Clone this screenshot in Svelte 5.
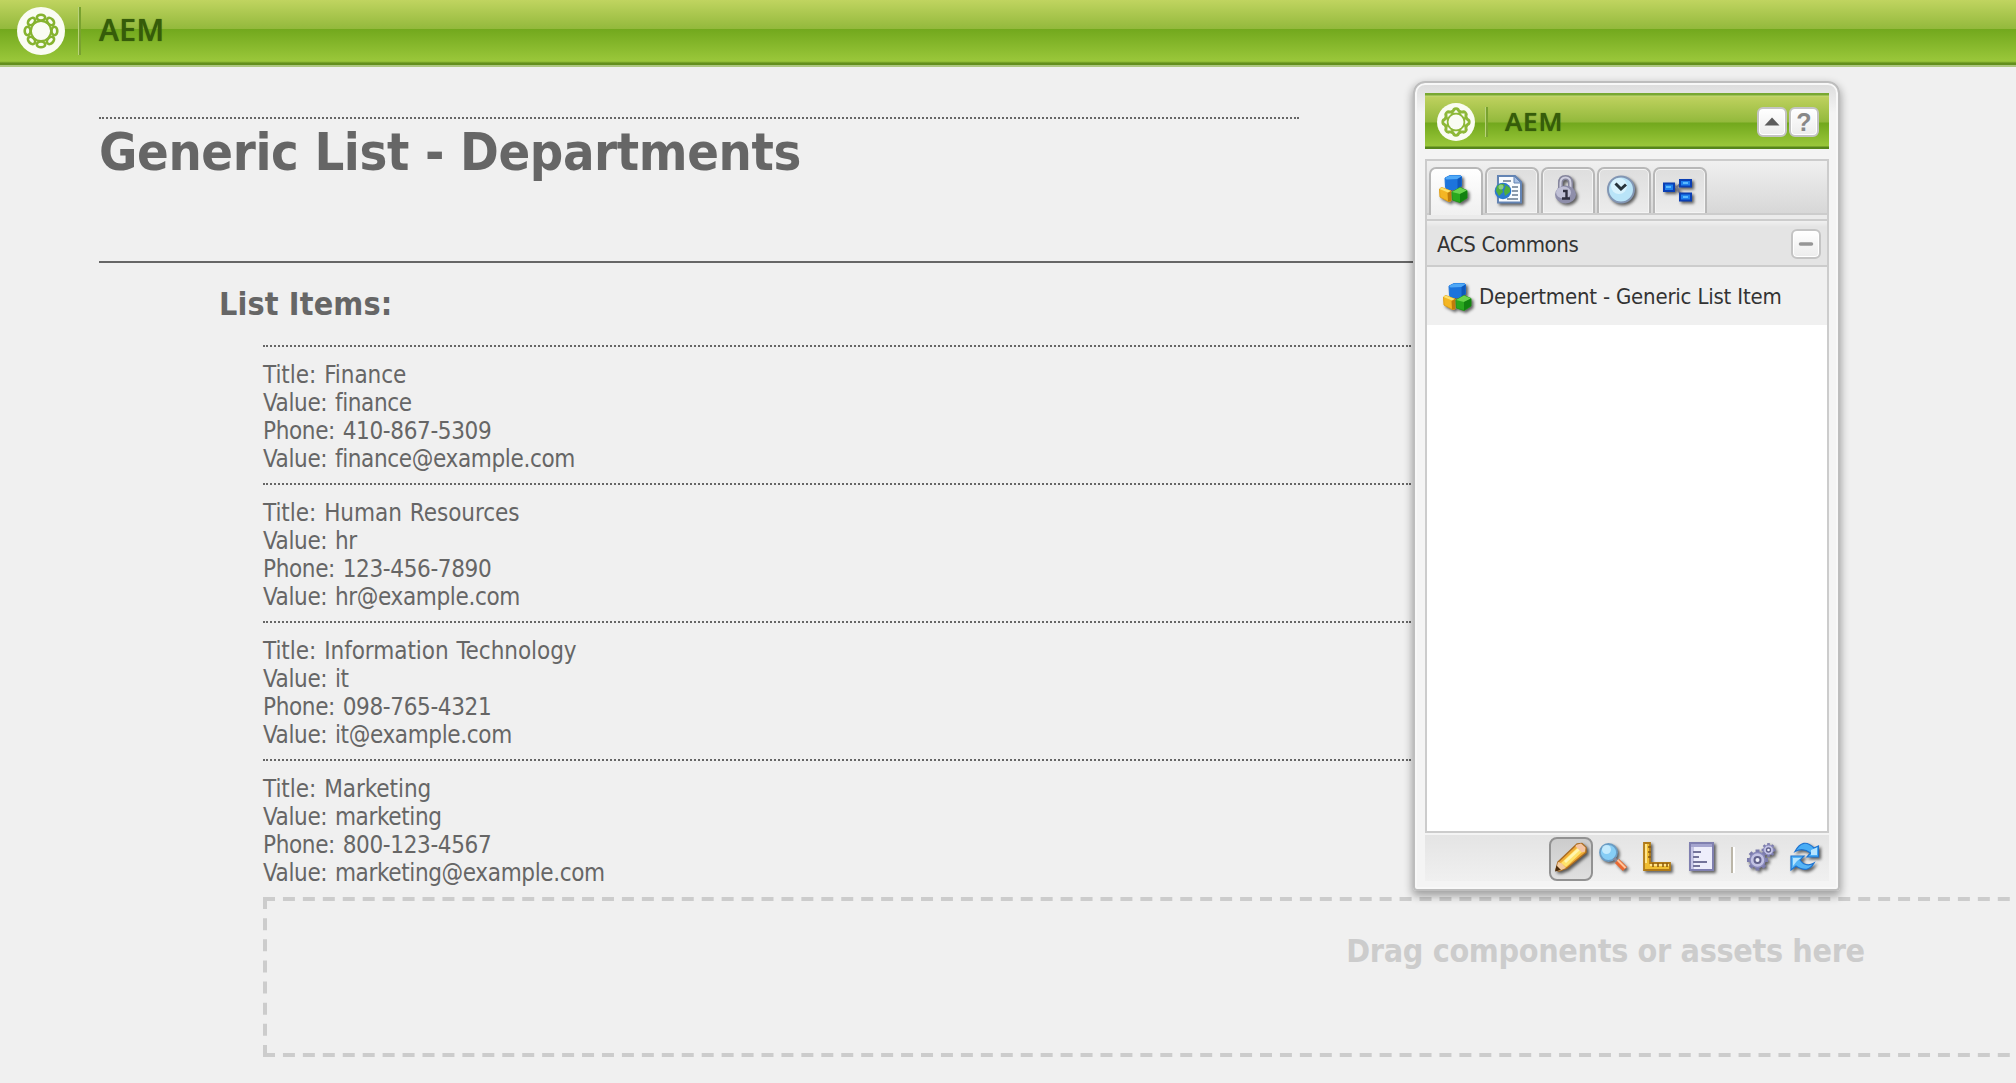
<script>
  const departments = [
    ['Finance', 'finance', '410-867-5309', 'finance@example.com'],
    ['Human Resources', 'hr', '123-456-7890', 'hr@example.com'],
    ['Information Technology', 'it', '098-765-4321', 'it@example.com'],
    ['Marketing', 'marketing', '800-123-4567', 'marketing@example.com']
  ];
  const tabs = ['cubes', 'page', 'lock', 'clock', 'flow'];
  const petals = [0, 45, 90, 135, 180, 225, 270, 315];
  const teeth = [0, 45, 90, 135];
</script>

{#snippet logo()}
  <svg class="logo" viewBox="0 0 48 48">
    <circle cx="24" cy="24" r="24" fill="#fafcf3" />
    <g fill="none" stroke="#86b32f" stroke-width="2.6">
      {#each petals as a}
        <ellipse cx="24" cy="10.6" rx="4.2" ry="2.9" transform="rotate({a} 24 24)" />
      {/each}
      <circle cx="24" cy="24" r="10" stroke-width="1.8" />
    </g>
  </svg>
{/snippet}

{#snippet compactLogo()}
  <svg class="logo" viewBox="0 0 48 48">
    <circle cx="24" cy="24" r="24" fill="#fafcf3" />
    <g fill="#8db838">
      <circle cx="24" cy="24" r="16" />
      {#each petals as a}
        <circle cx="24" cy="10.500" r="5" transform="rotate({a} 24 24)" />
      {/each}
    </g>
    <g fill="#fafcf3">
      <circle cx="24" cy="24" r="9.500" />
      {#each petals as a}
        <path d="M20.600 12.400L24 8.600L27.400 12.400Z" transform="rotate({a} 24 24)" />
      {/each}
    </g>
  </svg>
{/snippet}

{#snippet icon(name)}
  <svg class="icon" viewBox="0 0 32 32">
    {#if name === 'cubes'}
      <g stroke-width="1" stroke-linejoin="round">
        <path d="M6 3l5-2.500h10l1.500 1v9.500l-4 3.500H8L6.500 12z" fill="#1c74dc" stroke="#1c74dc" />
        <path d="M6 3l5-2.500h10l1.500 1-4 2.500-11 .5z" fill="#4fa8f6" />
        <path d="M18.500 4l4-2.500v9.500l-4 3.500z" fill="#0f58bb" />
        <path d="M.5 14l2-1.500L12 16v10l-2.500.5L1 22z" fill="#f4b624" stroke="#e0a018" />
        <path d="M.5 14l2-1.500L12 16l-3 1.500z" fill="#fde26a" />
        <path d="M8.500 18l3.500-2v10l-3 .5z" fill="#c07c0a" />
        <path d="M13 17l8-4.500 7 3v7.500l-7 4.500-7.500-2.500z" fill="#2aa81e" stroke="#239a19" />
        <path d="M13 17l8-4.500 7 3-7 3.500z" fill="#6ad44e" />
        <path d="M21 19l7-3.500v7.500l-7 4.500z" fill="#128210" />
      </g>
    {:else if name === 'page'}
      <path d="M3 1h17l6 6v20.500H3z" fill="#f8fbff" stroke="#6384b4" stroke-width="2" />
      <path d="M19 1v7h7z" fill="#a8c0e4" stroke="#6384b4" />
      <path d="M8 6h8M17 12h6M17 16h6M17 20h6M12 24h11" stroke="#8a99ab" stroke-width="2" />
      <circle cx="8" cy="16" r="8.300" fill="#2a79cd" />
      <path d="M2 11q5-4 8-1l-3 4 1 3-4 4-3-5zM11 10l4 3v4l-5 4-1-5z" fill="#4fad3c" />
      <circle cx="6" cy="12" r="2.500" fill="#b8e8ad" opacity=".6" />
    {:else if name === 'lock'}
      <path d="M9.500 15V8q0-5.500 5-5.500t5 5.500v6" fill="none" stroke="#85859c" stroke-width="5" />
      <path d="M9.500 15V8q0-5.500 5-5.500t5 5.500v6" fill="none" stroke="#cfcfe0" stroke-width="2" />
      <ellipse cx="14.500" cy="19.500" rx="10.500" ry="9" fill="#8e8eaa" />
      <ellipse cx="12.500" cy="17.500" rx="7.500" ry="6" fill="#c0c0d6" />
      <path d="M12 16h3.500v7M11 23.500h8" fill="none" stroke="#303041" stroke-width="2.400" />
    {:else if name === 'clock'}
      <circle cx="14" cy="14.500" r="13" fill="#b9e4f8" stroke="#8296b4" stroke-width="2" />
      <circle cx="12" cy="11" r="8" fill="#e3f7ff" opacity=".75" />
      <path d="M8.500 8.500l5.500 5.500 5-4.500" fill="none" stroke="#26333b" stroke-width="3" />
    {:else if name === 'flow'}
      <path d="M11 12h3l4-4M13 12l6 9" fill="none" stroke="#778" stroke-width="2" />
      <path d="M1 8.500h10v7.500H1zM17 5h11v6.500H17zM17 18.500h11v7H17z" fill="#1f80ee" stroke="#0a3fb4" stroke-width="2" />
      <path d="M3 11h5v2H3zM20 7h5v2h-5zM20 21h5v2h-5z" fill="#5abaff" />
    {:else if name === 'pencil'}
      <path d="M1 27l2-8L22 1l5-.5 4 4v5L12 25l-8 3z" fill="#f1ad35" stroke="#a96c24" stroke-width="1.500" stroke-linejoin="round" />
      <path d="M6 20L22 5l5 4-16 15z" fill="#ffe36c" />
      <path d="M9 18L23 5l2 2-14 13z" fill="#fff6b0" />
      <path d="M21 2l5-1.500 4.500 4-.5 4-3 1-6.500-6z" fill="#f4c4a2" />
      <path d="M1 27l2-8 4 1.500 4 4.500-7 3z" fill="#f3cba0" />
      <path d="M0 28.500l1.500-6L6 27z" fill="#4a2b0c" />
    {:else if name === 'zoom'}
      <circle cx="9.500" cy="9.500" r="8.500" fill="#86cdf5" stroke="#6a9cc4" stroke-width="1.800" />
      <circle cx="7.500" cy="6.500" r="4.500" fill="#d2f1ff" opacity=".8" />
      <path d="M15 15l4 4" stroke="#889" stroke-width="3" />
      <path d="M18 18l8 8" stroke="#ea6830" stroke-width="6" />
      <path d="M18.500 17l8 8" stroke="#ffc59b" stroke-width="2" />
    {:else if name === 'ruler'}
      <path d="M1 0h6v20h20v7H1z" fill="#efbd32" stroke="#b07a18" stroke-width="1.800" />
      <path d="M2 1h2v19H2zM7 21h19v2H7z" fill="#ffe48b" />
      <path d="M5 4h3M5 9h3M5 14h3M10 20v4M15 20v4M20 20v4M24 20v4" stroke="#8a570c" stroke-width="1.500" />
    {:else if name === 'doc'}
      <g transform="translate(2 0)">
        <path d="M1 0h23v27H1z" fill="#eeeefb" stroke="#8080b0" stroke-width="2" />
        <path d="M2 1h21v3H2z" fill="#a5a5cf" />
        <path d="M2 4h3v22H2z" fill="#c6c6e5" />
        <path d="M4 9h8M4 14h6M4 19h14M4 23h7" stroke="#74749a" stroke-width="2" />
      </g>
    {:else if name === 'gears'}
      {#each [[21.500, 7, 0.66], [10.500, 17, 1]] as [x, y, s]}
        <g transform="translate({x} {y}) scale({s})">
          {#each teeth as a}
            <path d="M0-10.500V10.500" stroke="#7c7cac" stroke-width="4" transform="rotate({a})" />
          {/each}
          <circle r="7.500" fill="#c2c2e4" stroke="#8888ba" stroke-width="1.500" />
          <circle r="3" fill="#f0f0fa" stroke="#62628c" stroke-width="2" />
        </g>
      {/each}
    {:else if name === 'refresh'}
      <path d="M4 8.500Q12-6 23 5l4.500-2v11H16l3.500-4Q12 4 4 8.500z" fill="#48adf5" stroke="#1f74d0" stroke-width="1.200" />
      <path d="M0 13h13l-4 4q6 8 14 3-6 11-18 3l-5 4z" fill="#55b4f6" stroke="#1f74d0" stroke-width="1.200" />
      <path d="M20 7l6-2.500V12h-6zM2 15h8l-4 3-4 5z" fill="#b5e4ff" />
    {/if}
  </svg>
{/snippet}

<div class="screen">
  <header class="topbar">
    {@render logo()}
    <span class="rule"></span>
    <span class="brand">AEM</span>
  </header>

  <main>
    <div class="title"><h1>Generic List - Departments</h1></div>
    <section class="items">
      <h2>List Items:</h2>
      <div class="list">
        {#each departments as [title, value, phone, email]}
          <div class="item">
            <div class="name">Title: {title}</div>
            <div>Value: {value}</div>
            <div>Phone: {phone}</div>
            <div>Value: {email}</div>
          </div>
        {/each}
      </div>
      <div class="drop">
        <svg class="dashes" viewBox="0 0 2685 160">
          <g fill="none" stroke="#ccc" stroke-width="4">
            <path d="M0 2H2685M0 158H2685" stroke-dasharray="12 7.940" />
            <path d="M2 0V160" stroke-dasharray="12 9.140" />
          </g>
        </svg>
        <span>Drag components or assets here</span>
      </div>
    </section>
  </main>

  <aside class="sidekick">
    <div class="panelhead">
      {@render compactLogo()}
      <span class="rule"></span>
      <span class="brand">AEM</span>
      <button class="tool up"><svg viewBox="0 0 26 26"><path d="M5.500 16.500l7.500-8 7.500 8z" fill="#5c5c5c" /></svg></button>
      <button class="tool help">?</button>
    </div>
    <div class="body">
      <nav class="tabs">
        {#each tabs as tab, i}
          <div class="tab" class:active={i === 0}>{@render icon(tab)}</div>
        {/each}
      </nav>
      <div class="spacer"></div>
      <div class="group">
        <span>ACS Commons</span>
        <button class="tool"><svg viewBox="0 0 26 26"><path d="M7.500 13h11" stroke="#969696" stroke-width="3.500" stroke-linecap="round" /></svg></button>
      </div>
      <div class="component">{@render icon('cubes')}<span>Depertment - Generic List Item</span></div>
    </div>
    <footer class="toolbar">
      <div class="btn pressed">{@render icon('pencil')}</div>
      <div class="btn">{@render icon('zoom')}</div>
      <div class="btn">{@render icon('ruler')}</div>
      <div class="btn">{@render icon('doc')}</div>
      <div class="divider"></div>
      <div class="btn">{@render icon('gears')}</div>
      <div class="btn">{@render icon('refresh')}</div>
    </footer>
  </aside>
</div>

<style>
  :global(body) { background: #f0f0f0; overflow: hidden; }
  .screen {
    position: relative; width: 2016px; height: 1083px; overflow: hidden; background: #f0f0f0;
    color: #666; font: 24px/28px "DejaVu Sans Condensed", "DejaVu Sans", sans-serif; font-stretch: condensed;
    font-variant-ligatures: none;
  }
  .screen * { box-sizing: border-box; }
  svg { display: block; flex: none; }
  h1, h2 { margin: 0; white-space: nowrap; }
  .topbar {
    display: flex; align-items: flex-start; height: 67px; padding: 7px 0 0 17px;
    background: linear-gradient(#c0d460 0, #93b93c 29px, #72a81d 29px, #9ac73a 61px, #8ab632 62px, #638f1d 63px, #638f1d 65px, #adc781 65px);
  }
  .topbar .logo { width: 48px; height: 48px; }
  .rule { width: 3px; border-left: 1px solid #b9d27b; background: #79a22f; }
  .topbar .rule { height: 48px; margin-left: 13px; }
  .brand { font-family: "Open Sans", sans-serif; font-weight: 600; color: #365c0a; font-stretch: normal; text-shadow: 0 0 1px #365c0a; }
  .topbar .brand { margin: 7px 0 0 18px; font-size: 30px; line-height: 32px; letter-spacing: 0.4px; }
  main { padding: 50px 0 0 99px; }
  .title { width: 1331px; height: 146px; border-bottom: 2px solid #666; }
  h1 { width: 1200px; border-top: 2px dotted #666; padding-top: 2px; font-size: 52px; line-height: 62px; letter-spacing: -0.36px; }
  .items { padding: 22px 0 0 120px; }
  h2 { height: 60px; font-size: 32px; line-height: 38px; letter-spacing: 0.15px; }
  .list { width: 1148px; margin-left: 44px; }
  .item { height: 138px; border-top: 2px dotted #666; padding-top: 14px; letter-spacing: -0.36px; word-spacing: 1.2px; }
  .name { letter-spacing: -0.05px; }
  .drop {
    position: relative; width: 2685px; height: 160px; margin-left: 44px; padding-top: 35px;
    font-size: 32px; line-height: 38px; font-weight: bold; color: #ccc; text-align: center; white-space: nowrap;
    letter-spacing: -0.34px;
  }
  .dashes { position: absolute; inset: 0; width: 2685px; height: 160px; }
  .sidekick {
    position: absolute; left: 1413px; top: 81px; width: 427px; height: 810px; padding: 10px 9px 7px 10px;
    border: 2px solid #bdbdbd; border-radius: 12px 12px 4px 4px;
    background: linear-gradient(#dcdcdc, #f4f4f4 30px); box-shadow: inset 0 0 0 2px #f8f8f8, 0 4px 8px 1px #0005;
    color: #333; font-size: 22px;
  }
  .panelhead {
    display: flex; height: 56px; padding: 10px 10px 0 12px;
    background: linear-gradient(#78a832 0, #78a832 2px, #c5d977 3px, #bed15e 4px, #93b93c 29px, #72a81d 30px, #9ac73a 53px, #56851b 54px);
  }
  .panelhead .logo { width: 38px; height: 38px; }
  .panelhead .rule { height: 30px; margin: 4px 0 0 10px; }
  .panelhead .brand { margin: 4px auto 0 17px; font-size: 26px; line-height: 28px; letter-spacing: 0.9px; }
  .tool {
    width: 30px; height: 30px; padding: 0; border: 2px solid #c4c4c4; border-radius: 6px; flex: none;
    background: linear-gradient(#fff, #ececec); box-shadow: inset 0 0 0 1px #fff; color: #888;
    font: bold 25px/26px "Liberation Sans", sans-serif; text-align: center;
  }
  .panelhead .tool { margin: 4px 0 0 2px; }
  .tool svg { width: 26px; height: 26px; }
  .body { height: 674px; margin-top: 10px; border: 2px solid #ccc; background: #fff; }
  .tabs { display: flex; gap: 2px; height: 54px; padding: 6px 0 0 2px; border-bottom: 2px solid #ccc; background: linear-gradient(#f0f0f0, #d7d7d7); }
  .tab {
    width: 54px; height: 46px; padding: 6px 0 0 8px; border: 2px solid #b8b8b8; border-bottom: 0;
    border-radius: 7px 7px 0 0; background: linear-gradient(#dedede, #ececec); box-shadow: inset 0 0 0 1px #f4f4f4;
  }
  .tab.active { height: 48px; background: linear-gradient(#fff, #f0f0f0); box-shadow: none; }
  .icon { width: 32px; height: 32px; overflow: visible; filter: drop-shadow(2px 2px 1.5px #0009); }
  .spacer { height: 6px; border-bottom: 2px solid #ccc; background: #ebebeb; }
  .group {
    display: flex; justify-content: space-between; height: 46px; padding: 8px 6px 0 10px;
    border-bottom: 2px solid #ccc; background: linear-gradient(#f0f0f0, #e4e4e4 6px);
  }
  .group span { padding-top: 2px; letter-spacing: -0.34px; }
  .component { display: flex; height: 58px; padding: 16px 0 0 16px; background: #f0f0f0; }
  .component span { margin-left: 4px; white-space: nowrap; letter-spacing: -0.2px; }
  .toolbar { display: flex; height: 46px; margin-top: 2px; padding: 2px 0 0 124px; background: linear-gradient(#e4e4e4, #f0f0f0); }
  .btn { width: 44px; height: 44px; padding: 6px; flex: none; }
  .pressed { padding: 4px; border: 2px solid #929292; border-radius: 8px; background: linear-gradient(#ccc, #e0e0e0); }
  .divider { width: 4px; height: 26px; margin: 10px 6px 0; border-left: 2px solid #bbb6a8; border-right: 2px solid #fff; flex: none; }
</style>
